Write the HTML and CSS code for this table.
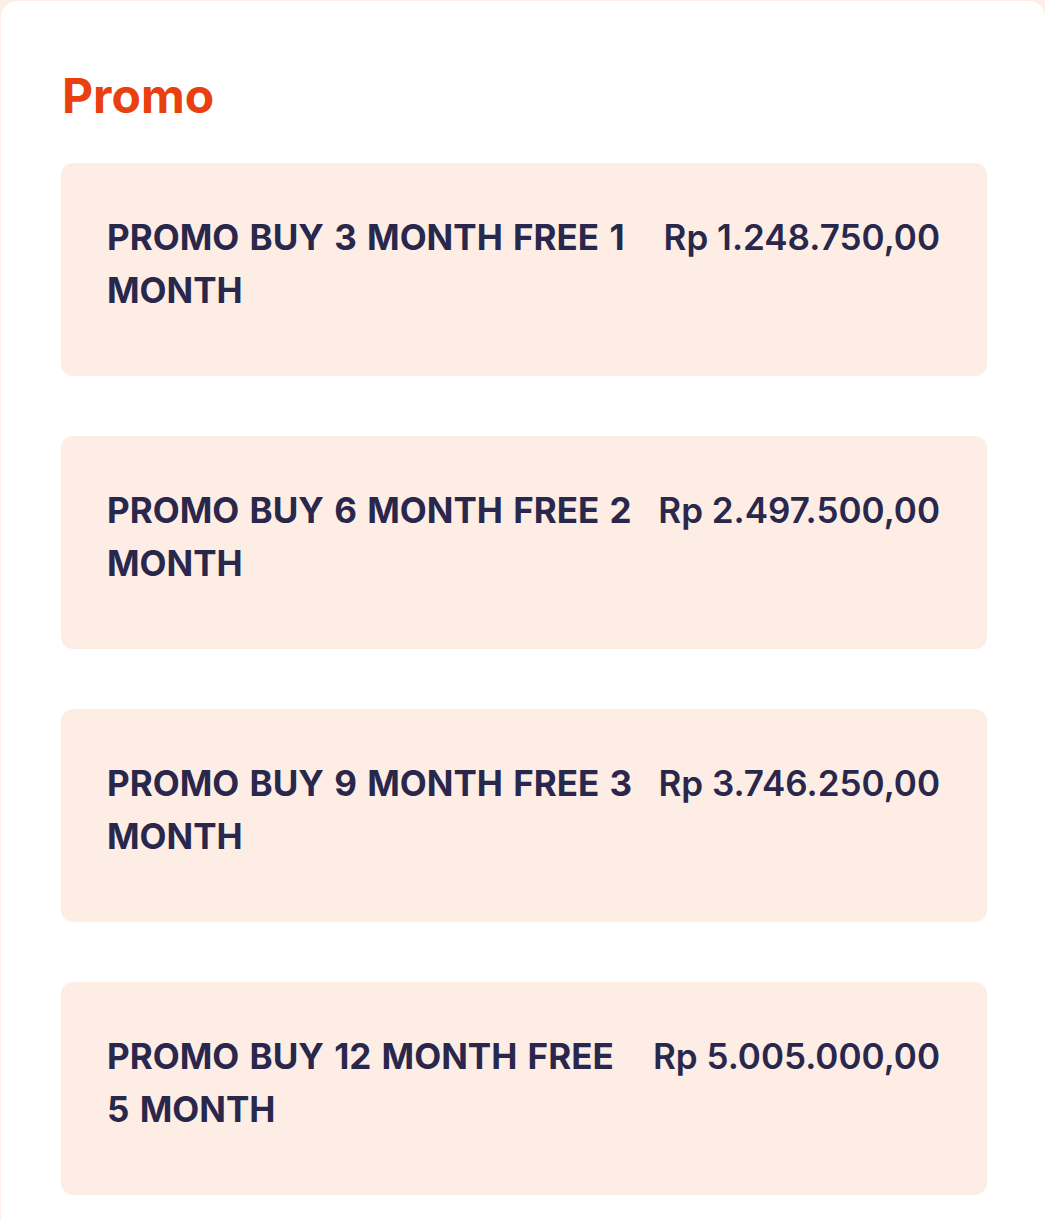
FILE: index.html
```html
<!DOCTYPE html>
<html lang="id">
<head>
<meta charset="utf-8">
<title>Promo</title>
<link rel="stylesheet" href="styles.css">
</head>
<body>
<section class="card">
  <h2 class="title">Promo</h2>
  <ul class="list">
    <li class="item">
      <span class="name">PROMO BUY 3 MONTH FREE 1 MONTH</span>
      <span class="price">Rp 1.248.750,00</span>
    </li>
    <li class="item">
      <span class="name">PROMO BUY 6 MONTH FREE 2 MONTH</span>
      <span class="price">Rp 2.497.500,00</span>
    </li>
    <li class="item">
      <span class="name">PROMO BUY 9 MONTH FREE 3 MONTH</span>
      <span class="price">Rp 3.746.250,00</span>
    </li>
    <li class="item">
      <span class="name">PROMO BUY 12 MONTH FREE 5 MONTH</span>
      <span class="price">Rp 5.005.000,00</span>
    </li>
  </ul>
</section>
</body>
</html>
```
FILE: styles.css
```css
html, body {
  margin: 0;
  padding: 0;
}
body {
  background: #fdeee7;
  font-family: Inter, "Noto Sans", "Liberation Sans", sans-serif;
  height: 1221px;
  overflow: hidden;
}
.card {
  margin: 1px 0 0 1px;
  width: 1044px;
  min-height: 1300px;
  box-sizing: border-box;
  background: #ffffff;
  border-radius: 16px 16px 0 0;
  padding: 66px 58px 0 60px;
}
.title {
  margin: 0 0 38px 1px;
  font-size: 48px;
  line-height: 58px;
  font-weight: 700;
  color: #e8410f;
}
.list {
  list-style: none;
  margin: 0;
  padding: 0;
  display: flex;
  flex-direction: column;
  gap: 60px;
}
.item {
  display: flex;
  align-items: flex-start;
  justify-content: space-between;
  gap: 24px;
  height: 213px;
  box-sizing: border-box;
  padding: 48px 47px 0 46px;
  background: #fdede5;
  border-radius: 12px;
  color: #29284c;
  font-size: 35px;
  line-height: 53px;
}
.name {
  flex: 1 1 auto;
  font-weight: 700;
  word-spacing: 2px;
}
.price {
  flex: 0 0 auto;
  font-weight: 600;
}
```
